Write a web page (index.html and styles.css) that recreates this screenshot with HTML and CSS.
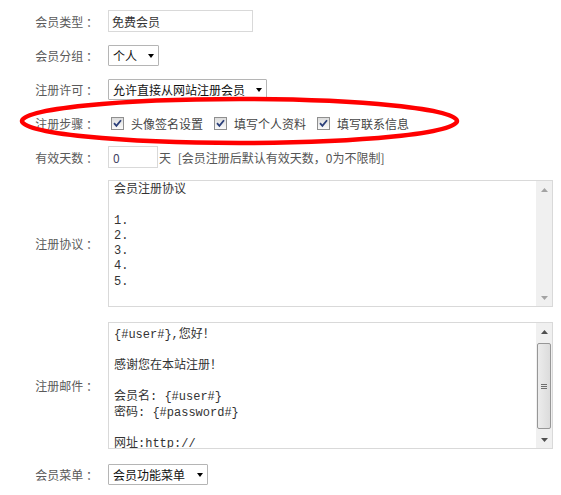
FILE: index.html
```html
<!DOCTYPE html>
<html lang="zh-CN">
<head>
  <meta charset="UTF-8">
  <title>会员设置</title>
  <link rel="stylesheet" href="styles.css">
</head>
<body>
  <div class="page">
    <form class="member-form">
      <div class="form-row">
        <span class="row-label">会员类型 ：</span>
        <div class="row-field">
          <input type="text" class="text-input type-input" value="免费会员">
        </div>
      </div>

      <div class="form-row">
        <span class="row-label">会员分组 ：</span>
        <div class="row-field">
          <span class="select-box group-select">
            <select><option>个人</option><option>企业</option></select>
          </span>
        </div>
      </div>

      <div class="form-row">
        <span class="row-label">注册许可 ：</span>
        <div class="row-field">
          <span class="select-box allow-select">
            <select><option>允许直接从网站注册会员</option><option>不允许注册</option></select>
          </span>
        </div>
      </div>

      <div class="form-row">
        <span class="row-label">注册步骤 ：</span>
        <div class="row-field steps">
          <label class="step">
            <span class="check"><svg width="11" height="11" viewBox="0 0 11 11"><path d="M2 5.2 L4.4 7.8 L9 2.2" /></svg></span>
            头像签名设置
          </label>
          <label class="step">
            <span class="check"><svg width="11" height="11" viewBox="0 0 11 11"><path d="M2 5.2 L4.4 7.8 L9 2.2" /></svg></span>
            填写个人资料
          </label>
          <label class="step">
            <span class="check"><svg width="11" height="11" viewBox="0 0 11 11"><path d="M2 5.2 L4.4 7.8 L9 2.2" /></svg></span>
            填写联系信息
          </label>
        </div>
      </div>

      <div class="form-row">
        <span class="row-label">有效天数 ：</span>
        <div class="row-field">
          <input type="text" class="text-input days-input" value="0">
          <span class="hint">天 [会员注册后默认有效天数，0为不限制]</span>
        </div>
      </div>

      <div class="form-row area-row">
        <span class="row-label">注册协议 ：</span>
        <div class="row-field">
          <div class="area-box">
            <textarea class="area-text">会员注册协议

1.
2.
3.
4.
5.</textarea>
            <div class="scroll-bar">
              <span class="scroll-btn"><svg width="7" height="4" viewBox="0 0 7 4"><path d="M0 4 L3.5 0 L7 4Z" /></svg></span>
              <span class="scroll-track"></span>
              <span class="scroll-btn"><svg width="7" height="4" viewBox="0 0 7 4"><path d="M0 0 L7 0 L3.5 4Z" /></svg></span>
            </div>
          </div>
        </div>
      </div>

      <div class="form-row area-row mail-row">
        <span class="row-label">注册邮件 ：</span>
        <div class="row-field">
          <div class="area-box">
            <textarea class="area-text mail-text">{#user#},您好！

感谢您在本站注册！

会员名: {#user#}
密码: {#password#}

网址:http://
</textarea>
            <div class="scroll-bar active">
              <span class="scroll-btn"><svg width="7" height="4" viewBox="0 0 7 4"><path d="M0 4 L3.5 0 L7 4Z" /></svg></span>
              <span class="scroll-track">
                <span class="scroll-thumb">
                  <svg width="6" height="5" viewBox="0 0 6 5"><path d="M0 0.5 H6 M0 2.5 H6 M0 4.5 H6" /></svg>
                </span>
              </span>
              <span class="scroll-btn"><svg width="7" height="4" viewBox="0 0 7 4"><path d="M0 0 L7 0 L3.5 4Z" /></svg></span>
            </div>
          </div>
        </div>
      </div>

      <div class="form-row menu-row">
        <span class="row-label">会员菜单 ：</span>
        <div class="row-field">
          <span class="select-box menu-select">
            <select><option>会员功能菜单</option></select>
          </span>
        </div>
      </div>
    </form>

    <!-- red mark drawn over the steps row -->
    <svg class="mark" width="561" height="495" viewBox="0 0 561 495">
      <ellipse cx="239.5" cy="121" rx="217.5" ry="22" />
    </svg>
  </div>
</body>
</html>
```

FILE: styles.css
```css
/* Page */
body {
  margin: 0;
  background: #fff;
  font-family: "Noto Sans CJK SC", "Liberation Sans", sans-serif;
  font-size: 12px;
  color: #555;
}

.page {
  position: relative;
  width: 561px;
  height: 495px;
  overflow: hidden;
}

/* Form rows */
.member-form {
  padding-top: 4px;
}

.form-row {
  display: flex;
  align-items: center;
  min-height: 34px;
}

.row-label {
  flex: 0 0 108px;
  box-sizing: border-box;
  padding-right: 10px;
  text-align: right;
  white-space: nowrap;
  color: #5a5a5a;
}

.row-field {
  display: flex;
  align-items: center;
}

/* Text inputs */
.text-input {
  height: 22px;
  box-sizing: border-box;
  border: 1px solid #d9d9d9;
  padding: 0 3px;
  margin: 0;
  font: inherit;
  color: #333;
  outline: none;
}

.type-input {
  width: 145px;
}

.days-input {
  width: 50px;
  padding-left: 4px;
  color: #446;
}

.hint {
  margin-left: 1px;
  word-spacing: 4px;
  color: #555;
}

/* Selects */
.select-box {
  position: relative;
  display: inline-block;
  height: 21px;
}

.select-box select {
  width: 100%;
  height: 21px;
  box-sizing: border-box;
  border: 1px solid #b5b5b5;
  border-radius: 1px;
  padding: 0 0 0 4px;
  margin: 0;
  background: #fff;
  font: inherit;
  color: #111;
  appearance: none;
  -webkit-appearance: none;
  outline: none;
}

.select-box::after {
  content: "";
  position: absolute;
  right: 5px;
  top: 9px;
  border-left: 3.5px solid transparent;
  border-right: 3.5px solid transparent;
  border-top: 4px solid #000;
  pointer-events: none;
}

.group-select { width: 51px; }
.allow-select { width: 159px; }
.menu-select { width: 100px; }

/* Step checkboxes */
.steps {
  padding-left: 3px;
}

.step {
  display: flex;
  align-items: center;
  margin-right: 11px;
  color: #444;
}

.check {
  width: 11px;
  height: 11px;
  border: 1px solid #8f8f8f;
  background: linear-gradient(#dcdcdc, #fbfbfb);
  margin-right: 7px;
  display: flex;
}

.check path {
  fill: none;
  stroke: #2b3f7a;
  stroke-width: 1.8;
}

/* Text areas */
.area-row {
  padding: 6px 0;
}

.mail-row {
  padding-top: 9px;
}

.menu-row {
  padding-top: 2px;
}

.area-box {
  display: flex;
  width: 445px;
  height: 127px;
  box-sizing: border-box;
  border: 1px solid #d9d9d9;
}

.area-text {
  flex: 1;
  border: none;
  margin: 0;
  padding: 2px 5px 0;
  resize: none;
  overflow: hidden;
  font-family: "Liberation Mono", "Noto Sans CJK SC", monospace;
  font-size: 12px;
  line-height: 15.25px;
  color: #333;
  outline: none;
}

.mail-text {
  padding-top: 5px;
  line-height: 15.5px;
}

/* Drawn scroll bars */
.scroll-bar {
  width: 16px;
  display: flex;
  flex-direction: column;
  background: #f0f0f0;
}

.scroll-btn {
  height: 17px;
  display: flex;
  align-items: center;
  justify-content: center;
}

.scroll-btn path {
  fill: #a3a3a3;
}

.scroll-bar.active .scroll-btn path {
  fill: #505050;
}

.scroll-track {
  flex: 1;
  display: flex;
  flex-direction: column;
}

.scroll-thumb {
  height: 86px;
  margin: 3px 1px 0;
  box-sizing: border-box;
  border: 1px solid #979797;
  border-radius: 2px;
  background: linear-gradient(to right, #ececec, #dcdcdc);
  display: flex;
  align-items: center;
  justify-content: center;
}

.scroll-thumb path {
  stroke: #6e6e6e;
  stroke-width: 1;
}

/* Red mark over the steps row */
.mark {
  position: absolute;
  left: 0;
  top: 0;
  pointer-events: none;
}

.mark ellipse {
  fill: none;
  stroke: #f00;
  stroke-width: 4.5;
}
```
